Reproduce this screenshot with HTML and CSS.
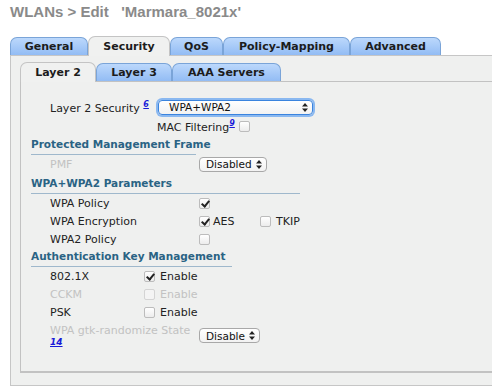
FILE: index.html
```html
<!DOCTYPE html>
<html lang="en">
<head>
    <meta charset="UTF-8">
    <title>WLANs &gt; Edit</title>
    <link rel="stylesheet" href="styles.css">
</head>
<body>
    <div class="title">WLANs &gt; Edit &nbsp; 'Marmara_8021x'</div>

    <div class="tabs">
        <div class="tab w-general">General</div>
        <div class="tab active w-security">Security</div>
        <div class="tab w-qos">QoS</div>
        <div class="tab w-policy">Policy-Mapping</div>
        <div class="tab w-adv">Advanced</div>
    </div>

    <div class="panel">
        <div class="tabs sub">
            <div class="tab active w-l2">Layer 2</div>
            <div class="tab w-l3">Layer 3</div>
            <div class="tab w-aaa">AAA Servers</div>
        </div>

        <div class="inner">
            <div class="row sec-row">
                <span class="label">Layer 2 Security <a class="ref">6</a></span>
                <div class="select focus wide">
                    <span>WPA+WPA2</span>
                    <svg class="arrows" width="6" height="9" viewBox="0 0 6 9"><path d="M3 0L6 3.5H0Z M3 9L6 5.5H0Z" fill="#222"/></svg>
                </div>
            </div>
            <div class="row mac-row">
                <span>MAC Filtering<a class="ref">9</a></span>
                <span class="cb"></span>
            </div>

            <div class="heading pmf-h">Protected Management Frame</div>
            <div class="row">
                <span class="label col1 muted">PMF</span>
                <div class="select">
                    <span>Disabled</span>
                    <svg class="arrows" width="6" height="9" viewBox="0 0 6 9"><path d="M3 0L6 3.5H0Z M3 9L6 5.5H0Z" fill="#222"/></svg>
                </div>
            </div>

            <div class="heading wpa-h">WPA+WPA2 Parameters</div>
            <div class="row">
                <span class="label col1">WPA Policy</span>
                <span class="cb on"></span>
            </div>
            <div class="row">
                <span class="label col1">WPA Encryption</span>
                <span class="cb on"></span><span class="opt aes">AES</span>
                <span class="cb"></span><span class="opt">TKIP</span>
            </div>
            <div class="row">
                <span class="label col1">WPA2 Policy</span>
                <span class="cb"></span>
            </div>

            <div class="heading akm-h">Authentication Key Management</div>
            <div class="row">
                <span class="label col2">802.1X</span>
                <span class="cb on"></span><span class="opt">Enable</span>
            </div>
            <div class="row muted">
                <span class="label col2">CCKM</span>
                <span class="cb off"></span><span class="opt">Enable</span>
            </div>
            <div class="row">
                <span class="label col2">PSK</span>
                <span class="cb"></span><span class="opt">Enable</span>
            </div>
            <div class="row gtk-row">
                <span class="label col1 muted">WPA gtk-randomize State<br><a class="ref big">14</a></span>
                <div class="select">
                    <span>Disable</span>
                    <svg class="arrows" width="6" height="9" viewBox="0 0 6 9"><path d="M3 0L6 3.5H0Z M3 9L6 5.5H0Z" fill="#222"/></svg>
                </div>
            </div>
        </div>
    </div>
</body>
</html>
```

FILE: styles.css
```css
* {
    margin: 0;
    padding: 0;
    box-sizing: border-box;
}

body {
    width: 492px;
    height: 390px;
    overflow: hidden;
    background: #fff;
    font-family: "DejaVu Sans", Verdana, sans-serif;
    font-size: 11px;
    color: #222;
}

.title {
    height: 36px;
    padding: 3px 0 0 10px;
    font-family: "Liberation Sans", Arial, sans-serif;
    font-size: 15px;
    font-weight: bold;
    color: #8a8a8a;
    white-space: pre;
}

/* tab strips */
.tabs {
    display: flex;
    align-items: flex-end;
    padding-left: 10px;
    height: 19px;
    position: relative;
    z-index: 1;
}

.tabs.sub {
    padding-left: 0;
}

.tab {
    height: 18px;
    border: 1px solid #7aa4d8;
    border-bottom: none;
    border-radius: 7px 7px 0 0;
    background: linear-gradient(to bottom, #bcd8fc, #92bcf4);
    font-weight: bold;
    font-size: 11px;
    line-height: 17px;
    text-align: center;
    color: #1c1c1c;
}

.tab.active {
    height: 20px;
    margin-bottom: -1px;
    border-color: #c4c4c4;
    background: #f0f1f0;
    line-height: 19px;
}

.w-general { width: 78px; }
.w-security { width: 82px; }
.w-qos { width: 53px; }
.w-policy { width: 127px; }
.w-adv { width: 91px; }
.w-l2 { width: 76px; }
.w-l3 { width: 76px; }
.w-aaa { width: 109px; }

/* panel runs off the right edge of the shot, so no right border */
.panel {
    margin-left: 10px;
    width: 482px;
    height: 331px;
    border: 1px solid #c6c6c6;
    border-right: none;
    background: #eff0ef;
    padding: 6px 0 0 9px;
}

.inner {
    height: 292px;
    border: 1px solid #c2c2c2;
    border-right: none;
    border-bottom-width: 2px;
    background: #eff0ef;
    padding: 0 0 0 10px;
}

/* form rows */
.row {
    display: flex;
    align-items: center;
    height: 18px;
    padding-left: 19px;
}

.label {
    flex-shrink: 0;
}

.col1 { width: 149px; }
.col2 { width: 94px; }

.muted, .muted .cb {
    color: #c2c2c2;
}

.sec-row {
    margin-top: 16px;
    height: 18px;
}

.sec-row .label {
    width: 108px;
}

.mac-row {
    height: 20px;
    padding-left: 126px;
}

.mac-row .cb {
    margin-left: 4px;
}

.ref {
    color: #1a1ad8;
    text-decoration: underline;
    font-weight: bold;
    font-style: italic;
    font-size: 8px;
    vertical-align: super;
}

.ref.big {
    font-size: 9px;
    vertical-align: top;
    line-height: 10px;
}

.heading {
    display: block;
    padding-bottom: 1px;
    font-weight: bold;
    font-size: 10.5px;
    color: #2a6384;
    border-bottom: 1px solid #9fb8cc;
    line-height: 17px;
    white-space: nowrap;
}

.pmf-h { width: 165px; }
.wpa-h { width: 269px; margin-top: 2px; }
.akm-h { width: 201px; margin-top: 0; }

/* checkboxes */
.cb {
    display: inline-block;
    width: 11px;
    height: 11px;
    border: 1px solid #bcbcbc;
    border-radius: 2px;
    background: linear-gradient(to bottom, #fff, #ececec);
    position: relative;
    flex-shrink: 0;
}

.cb.on::after {
    content: '';
    position: absolute;
    left: 3px;
    top: 0px;
    width: 3px;
    height: 6px;
    border: solid #222;
    border-width: 0 2px 2px 0;
    transform: rotate(40deg);
}

.cb.off {
    border-color: #d4d4d4;
    background: #f4f4f4;
}

.opt {
    margin-left: 5px;
}

.opt.aes {
    width: 47px;
    margin-left: 3px;
}

/* selects */
.select {
    display: flex;
    align-items: center;
    justify-content: space-between;
    height: 15px;
    padding: 0 4px 0 6px;
    border: 1px solid #a8a8a8;
    border-radius: 4px;
    background: linear-gradient(to bottom, #fff, #f2f2f2);
    font-size: 10.5px;
    color: #111;
}

.select span {
    margin-right: 4px;
}

.select.wide {
    width: 155px;
    padding-left: 10px;
}

.select.focus {
    border-color: #3b84de;
    box-shadow: 0 0 0 2px #8ab8f0;
}

.gtk-row {
    height: 28px;
    align-items: flex-start;
    padding-top: 3px;
}

.gtk-row .select {
    margin-top: 4px;
}
```
